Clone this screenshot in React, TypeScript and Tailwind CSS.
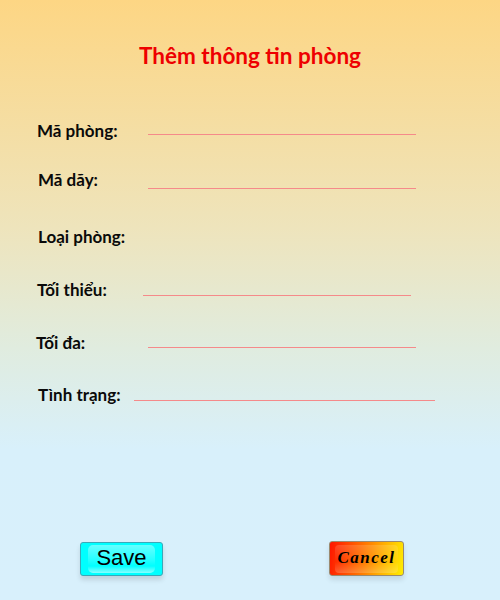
const FONT = "font-['Lato','Open_Sans',sans-serif]";

type Row = {
  label: string;
  rowClass: string;
  labelClass: string;
  lineClass?: string;
};

// top margins are measured from the previous row's bottom
const ROWS: Row[] = [
  { label: "Mã phòng:", rowClass: "mt-[50px]", labelClass: "ml-[37px] w-[111px]", lineClass: "w-[268px] mt-[13px]" },
  { label: "Mã dãy:", rowClass: "mt-[29px]", labelClass: "ml-[38px] w-[110px]", lineClass: "w-[268px] mt-[18px]" },
  { label: "Loại phòng:", rowClass: "mt-[37px]", labelClass: "ml-[38px] w-[110px]" },
  { label: "Tối thiểu:", rowClass: "mt-[33px]", labelClass: "ml-[37px] w-[106px]", lineClass: "w-[268px] mt-[15px]" },
  { label: "Tối đa:", rowClass: "mt-[33px]", labelClass: "ml-[36px] w-[112px]", lineClass: "w-[268px] mt-[14px]" },
  { label: "Tình trạng:", rowClass: "mt-[32px]", labelClass: "ml-[38px] w-[96px]", lineClass: "w-[301px] mt-[15px]" },
];

export default function App() {
  return (
    <div
      className={`relative flex h-[600px] w-[500px] flex-col bg-[linear-gradient(to_bottom,#fdd684_0%,#eee4bc_38%,#e0ecdf_58%,#d8f0fb_75%,#d8f0fc_100%)] ${FONT}`}
    >
      {/* Title */}
      <h1 className="mt-[41px] text-center text-[22.5px] font-bold leading-[30px] text-[#ee0000]">
        Thêm thông tin phòng
      </h1>

      {/* Form rows */}
      {ROWS.map((row) => (
        <div key={row.label} className={`flex h-[20px] items-start ${row.rowClass}`}>
          <span className={`shrink-0 text-[17px] font-bold leading-[20px] text-[#0a0a0a] ${row.labelClass}`}>
            {row.label}
          </span>
          {row.lineClass && (
            <div className={`h-px bg-[#f58a8a] ${row.lineClass}`} />
          )}
        </div>
      ))}

      {/* Buttons */}
      <div className="mt-auto mb-[24px] flex items-start">
        <button className="relative ml-[80px] h-[34px] w-[83px] rounded-[3px] border border-[#3aa8b8] bg-[#00ffff] shadow-[0_4px_5px_rgba(0,0,0,0.12)]">
          <span className="absolute inset-x-[7px] top-[2px] h-[28px] rounded-[5px] bg-[linear-gradient(to_bottom,#6ff_0%,#2ff_55%,#0ff_75%,#8ff_100%)]" />
          <span className="relative font-['Liberation_Sans',Arial,sans-serif] text-[22px] leading-none text-black">
            Save
          </span>
        </button>
        <button className="relative ml-[166px] mt-[-1px] h-[35px] w-[75px] overflow-hidden rounded-[3px] border border-[#9a8a70] bg-[linear-gradient(100deg,#ff1400_0%,#ff6a00_40%,#ffb000_70%,#ffee00_100%)] shadow-[0_4px_5px_rgba(0,0,0,0.1)]">
          <span className="absolute inset-x-[5px] top-[3px] h-[28px] rounded-[4px] bg-[linear-gradient(to_bottom,rgba(255,255,255,0.15),rgba(255,255,255,0)_60%,rgba(255,255,255,0.2))]" />
          <span className="relative -top-[2px] font-['Liberation_Serif','Times_New_Roman',serif] text-[17px] font-bold italic leading-none tracking-[1.5px] text-black">
            Cancel
          </span>
        </button>
      </div>
    </div>
  );
}
